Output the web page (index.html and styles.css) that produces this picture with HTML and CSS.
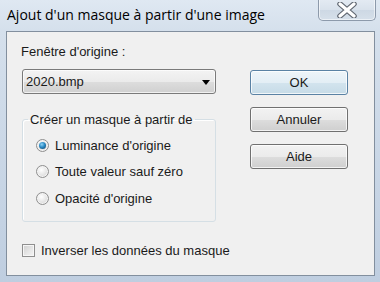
FILE: index.html
```html
<!DOCTYPE html>
<html lang="fr">
<head>
<meta charset="utf-8">
<title>Ajout d'un masque</title>
<link rel="stylesheet" href="styles.css">
</head>
<body>
<div class="window">
  <div class="titlebar">
    <span class="title">Ajout d'un masque à partir d'une image</span>
    <span class="close">
      <svg width="20" height="16" viewBox="0 0 20 16">
        <path d="M3 2 L17 14 M17 2 L3 14" stroke="#5f6670" stroke-width="5.5" stroke-linecap="round" fill="none"/>
        <path d="M3 2 L17 14 M17 2 L3 14" stroke="#ffffff" stroke-width="3.2" stroke-linecap="round" fill="none"/>
      </svg>
    </span>
  </div>
  <div class="client">
    <div class="leftcol">
      <div class="label">Fenêtre d'origine :</div>
      <div class="combo">
        <span class="combo-text">2020.bmp</span>
        <span class="arrow"></span>
      </div>
      <fieldset class="group">
        <legend>Créer un masque à partir de</legend>
        <div class="radio-row"><span class="radio checked"></span><span>Luminance d'origine</span></div>
        <div class="radio-row"><span class="radio"></span><span>Toute valeur sauf zéro</span></div>
        <div class="radio-row"><span class="radio"></span><span>Opacité d'origine</span></div>
      </fieldset>
      <div class="check-row"><span class="checkbox"></span><span>Inverser les données du masque</span></div>
    </div>
    <div class="rightcol">
      <div class="btn default">OK</div>
      <div class="btn">Annuler</div>
      <div class="btn">Aide</div>
    </div>
  </div>
</div>
</body>
</html>
```

FILE: styles.css
```css
html, body {
  margin: 0;
  padding: 0;
}
body {
  width: 380px;
  height: 282px;
  overflow: hidden;
}
.window {
  width: 380px;
  height: 282px;
  box-sizing: border-box;
  background: linear-gradient(180deg, #dfe8f2 0px, #d5e0ec 30px, #cbd8e7 140px, #bfcee0 282px);
  display: flex;
  flex-direction: column;
}
.titlebar {
  height: 31px;
  display: flex;
  align-items: flex-start;
  justify-content: space-between;
  padding-left: 7px;
  padding-right: 4px;
  box-sizing: border-box;
}
.title {
  font-family: "Open Sans", "Noto Sans", sans-serif;
  font-size: 14px;
  color: #000;
  line-height: 20px;
  padding-top: 5px;
}
.close {
  width: 58px;
  height: 22px;
  margin-top: -1px;
  box-sizing: border-box;
  border: 1px solid #8d9aab;
  border-top: none;
  border-radius: 0 0 5px 5px;
  background: linear-gradient(180deg, #e4ebf3 0%, #d9e2ec 50%, #cdd8e4 51%, #d6e0ea 100%);
  box-shadow: inset 0 0 0 1px rgba(255,255,255,0.55);
  display: flex;
  align-items: center;
  justify-content: center;
}
.close svg {
  display: block;
}
.client {
  margin: 0 5px 0 6px;
  height: 245px;
  box-sizing: border-box;
  border: 1px solid #828f9e;
  background: #f0f0f0;
  display: flex;
  font-family: "Liberation Sans", Arial, sans-serif;
  font-size: 13px;
  color: #1a1a1a;
}
.leftcol {
  padding-left: 15px;
  padding-top: 12px;
  width: 194px;
  display: flex;
  flex-direction: column;
}
.label {
  line-height: 15px;
  margin-left: -1px;
}
.combo {
  margin-top: 10px;
  height: 25px;
  box-sizing: border-box;
  border: 1px solid #7a7a7a;
  border-radius: 3px;
  background: linear-gradient(180deg, #f3f3f3 0%, #ebebeb 50%, #dddddd 51%, #d0d0d0 100%);
  box-shadow: inset 0 0 0 1px rgba(255,255,255,0.7);
  display: flex;
  align-items: center;
  justify-content: space-between;
  padding: 0 5px 0 3px;
}
.combo-text {
  line-height: 15px;
}
.arrow {
  width: 0;
  height: 0;
  border-left: 4.5px solid transparent;
  border-right: 4.5px solid transparent;
  border-top: 5px solid #000;
  margin-top: 1px;
}
.group {
  margin: 18px 0 0 0;
  padding: 5px 0 9px 13px;
  border: 1px solid #d5dfe5;
  border-radius: 3px;
  box-shadow: inset 1px 1px 0 #fff;
  min-width: 0;
}
.group legend {
  padding: 0 2px;
  margin-left: -8px;
  line-height: 15px;
}
.radio-row {
  height: 26.5px;
  display: flex;
  align-items: center;
  gap: 6px;
}
.radio {
  width: 13px;
  height: 13px;
  box-sizing: border-box;
  border-radius: 50%;
  border: 1px solid #8f8f8f;
  background: radial-gradient(circle at 40% 35%, #ffffff 0%, #e9e9e9 45%, #cfcfcf 100%);
  box-shadow: inset 0 0 0 1px #f4f4f4;
  position: relative;
  flex: none;
}
.radio.checked::after {
  content: "";
  position: absolute;
  left: 2px;
  top: 2px;
  width: 7px;
  height: 7px;
  border-radius: 50%;
  background: radial-gradient(circle at 40% 35%, #8fd3f5 0%, #2a8ac4 45%, #0b3b63 100%);
}
.check-row {
  margin-top: 21px;
  display: flex;
  align-items: center;
  gap: 6px;
  line-height: 15px;
  white-space: nowrap;
}
.checkbox {
  width: 13px;
  height: 13px;
  box-sizing: border-box;
  border: 1px solid #8f8f8f;
  background: linear-gradient(135deg, #cfcfcf 0%, #e8e8e8 60%, #f4f4f4 100%);
  box-shadow: inset 0 0 0 1px #f6f6f6;
  flex: none;
}
.rightcol {
  margin-left: auto;
  padding-right: 26px;
  padding-top: 38px;
  display: flex;
  flex-direction: column;
  gap: 12px;
}
.btn {
  width: 98px;
  height: 25px;
  box-sizing: border-box;
  border: 1px solid #707070;
  border-radius: 3px;
  background: linear-gradient(180deg, #f2f2f2 0%, #ebebeb 50%, #dddddd 51%, #cfcfcf 100%);
  box-shadow: inset 0 0 0 1px rgba(255,255,255,0.75);
  display: flex;
  align-items: center;
  justify-content: center;
  line-height: 15px;
}
.btn.default {
  border-color: #5a82a4;
  background: linear-gradient(180deg, #eef5f9 0%, #e3eef5 50%, #d3e4ee 51%, #c6dbe7 100%);
}
```
